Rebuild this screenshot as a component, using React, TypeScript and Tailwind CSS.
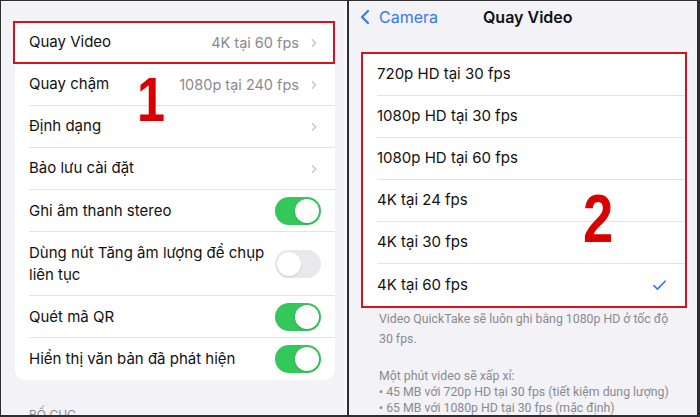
import { Check, ChevronLeft, ChevronRight } from 'lucide-react';

const font = { fontFamily: 'Inter, "Noto Sans", sans-serif' };
const bigDigit = { fontFamily: '"Liberation Sans", Arial, sans-serif' };

function Toggle({ on }: { on: boolean }) {
    return (
        <div
            className={
                on
                    ? 'relative w-[46px] h-[28px] rounded-full bg-[#34c759] shrink-0'
                    : 'relative w-[46px] h-[28px] rounded-full bg-[#e9e9eb] shrink-0'
            }
        >
            <span
                className={
                    on
                        ? 'absolute top-[2px] right-[2px] w-[24px] h-[24px] rounded-full bg-white shadow'
                        : 'absolute top-[2px] left-[2px] w-[24px] h-[24px] rounded-full bg-white shadow'
                }
            />
        </div>
    );
}

function NavRow({ label, value, last }: { label: string; value?: string; last?: boolean }) {
    return (
        <div className="h-[42px] pl-[14px] flex">
            <div
                className={
                    last
                        ? 'flex-1 flex items-center pr-[14px]'
                        : 'flex-1 flex items-center pr-[14px] border-b border-[#e3e3e6]'
                }
            >
                <span className="text-[15px] text-[#111]">{label}</span>
                <span className="ml-auto text-[14.5px] text-[#8a8a8e]">{value}</span>
                <ChevronRight size={14} strokeWidth={2} className="ml-[8px] text-[#c4c4c7]" />
            </div>
        </div>
    );
}

function ToggleRow({ label, on, tall, last }: { label: string; on: boolean; tall?: boolean; last?: boolean }) {
    return (
        <div className={tall ? 'h-[64px] pl-[14px] flex' : 'h-[42px] pl-[14px] flex'}>
            <div
                className={
                    last
                        ? 'flex-1 flex items-center pr-[14px]'
                        : 'flex-1 flex items-center pr-[14px] border-b border-[#e3e3e6]'
                }
            >
                <span className="text-[15px] leading-[22px] text-[#111] w-[240px]">{label}</span>
                <div className="ml-auto">
                    <Toggle on={on} />
                </div>
            </div>
        </div>
    );
}

const options = [
    '720p HD tại 30 fps',
    '1080p HD tại 30 fps',
    '1080p HD tại 60 fps',
    '4K tại 24 fps',
    '4K tại 30 fps',
    '4K tại 60 fps',
];

export default function App() {
    return (
        <div
            className="w-[700px] h-[417px] overflow-hidden flex bg-[#2e2e30] border-t border-l border-r-[3px] border-b-[2px] border-[#2e2e30]"
            style={font}
        >
            {/* Left: camera settings */}
            <div className="relative w-[346px] shrink-0 bg-[#f2f2f7] border-r-[2px] border-[#fbfbfd] pt-[21px] pl-[14px]">
                <div className="relative w-[320px] bg-white rounded-[10px]">
                    <div className="absolute -left-[2px] -top-[1px] w-[322px] h-[43px] border-2 border-[#d3131d]" />
                    <NavRow label="Quay Video" value="4K tại 60 fps" />
                    <NavRow label="Quay chậm" value="1080p tại 240 fps" />
                    <NavRow label="Định dạng" />
                    <NavRow label="Bảo lưu cài đặt" />
                    <ToggleRow label="Ghi âm thanh stereo" on />
                    <ToggleRow label="Dùng nút Tăng âm lượng để chụp liên tục" on={false} tall />
                    <ToggleRow label="Quét mã QR" on />
                    <ToggleRow label="Hiển thị văn bản đã phát hiện" on last />
                </div>
                <p className="mt-[26px] pl-[14px] text-[12px] text-[#8a8a8e] uppercase">Bố cục</p>
                <span
                    className="absolute left-[136px] top-[67px] text-[63px] font-bold text-[#d90000] leading-none scale-x-[0.8] origin-left"
                    style={bigDigit}
                >
                    1
                </span>
            </div>

            <div className="w-[2px] shrink-0" />

            {/* Right: video format */}
            <div className="relative flex-1 bg-[#f2f2f7]">
                <div className="h-[32px] flex items-center relative">
                    <div className="flex items-center pl-[4px] text-[#3478f6]">
                        <ChevronLeft size={24} strokeWidth={2.2} />
                        <span className="text-[16px] ml-[2px]">Camera</span>
                    </div>
                    <span className="absolute left-[134px] text-[16px] font-semibold text-[#111]">Quay Video</span>
                </div>

                <div className="relative mt-[21px] mx-[14px] bg-white">
                    <div className="absolute -inset-[2px] border-2 border-[#d3131d]" />
                    {options.map((o, i) => (
                        <div key={o} className="h-[42px] pl-[14px] flex">
                            <div
                                className={
                                    i === options.length - 1
                                        ? 'flex-1 flex items-center pr-[17px]'
                                        : 'flex-1 flex items-center pr-[17px] border-b border-[#e3e3e6]'
                                }
                            >
                                <span className="text-[15px] text-[#111]">{o}</span>
                                {i === options.length - 1 && (
                                    <Check size={17} strokeWidth={2.4} className="ml-auto text-[#3478f6]" />
                                )}
                            </div>
                        </div>
                    ))}
                    <span
                        className="absolute left-[220px] top-[130px] text-[68px] font-bold text-[#d90000] leading-none scale-x-[0.8] origin-left"
                        style={bigDigit}
                    >
                        2
                    </span>
                </div>

                <div
                    className="px-[30px] pt-[3px] text-[12.3px] text-[#8a8a8e] whitespace-nowrap"
                    style={{ fontFamily: 'Roboto, "Noto Sans", sans-serif' }}
                >
                    <p className="leading-[20px]">Video QuickTake sẽ luôn ghi bằng 1080p HD ở tốc độ</p>
                    <p className="leading-[20px]">30 fps.</p>
                    <p className="mt-[19px] leading-[16px]">Một phút video sẽ xấp xỉ:</p>
                    <p className="leading-[16px]">• 45 MB với 720p HD tại 30 fps (tiết kiệm dung lượng)</p>
                    <p className="leading-[16px]">• 65 MB với 1080p HD tại 30 fps (mặc định)</p>
                </div>
            </div>
        </div>
    );
}
